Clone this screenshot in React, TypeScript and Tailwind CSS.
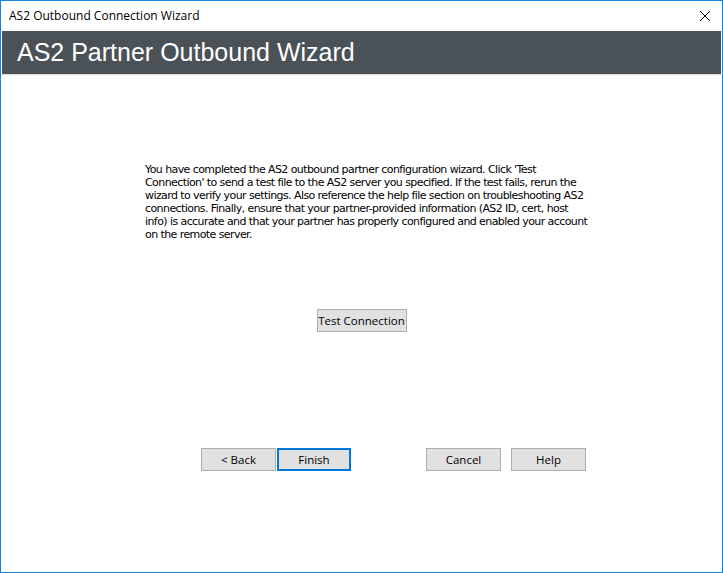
import React from 'react';

const lines = [
    "You have completed the AS2 outbound partner configuration wizard. Click 'Test",
    "Connection' to send a test file to the AS2 server you specified. If the test fails, rerun the",
    "wizard to verify your settings. Also reference the help file section on troubleshooting AS2",
    "connections. Finally, ensure that your partner-provided information (AS2 ID, cert, host",
    "info) is accurate and that your partner has properly configured and enabled your account",
    "on the remote server.",
];

const WinButton: React.FC<{ label: string; primary?: boolean; className?: string }> = ({ label, primary = false, className = '' }) => (
    <button
        className={`h-[23px] flex items-center justify-center whitespace-nowrap bg-[#e1e1e1] text-[11.5px] text-black ${primary ? 'border-2 border-[#0078d7]' : 'border border-[#adadad]'} ${className}`}
    >
        {label}
    </button>
);

export default function App() {
    return (
        <div
            className="w-[723px] h-[573px] flex flex-col bg-white border border-[#1883d7] overflow-hidden"
            style={{ fontFamily: '"Open Sans", "Noto Sans", sans-serif' }}
        >
            {/* Title bar */}
            <div className="h-[30px] flex items-center justify-between pl-[8px] pr-[10px]">
                <span className="text-[12px] text-black">AS2 Outbound Connection Wizard</span>
                <svg width="12" height="12" viewBox="0 0 12 12" className="mr-[1px]">
                    <path d="M1 1 L11 11 M11 1 L1 11" stroke="#000" strokeWidth="1" />
                </svg>
            </div>

            {/* Header */}
            <div className="mx-[1px] h-[44px] bg-[#4a5157] border-b border-[#dcdcdc] flex items-center pl-[15px]">
                <span className="text-white text-[25px] leading-none" style={{ fontFamily: '"Liberation Sans", Arial, sans-serif' }}>
                    AS2 Partner Outbound Wizard
                </span>
            </div>

            {/* Body */}
            <div className="flex-1 flex flex-col items-center pt-[88px]">
                <div
                    className="w-[445px] ml-[12px] text-[11px] leading-[13px] text-black"
                    style={{ fontFamily: '"DejaVu Sans", Tahoma, sans-serif' }}
                >
                    {lines.map((l, i) => (
                        <div key={i} className="whitespace-nowrap tracking-[-0.58px]">{l}</div>
                    ))}
                </div>

                <WinButton label="Test Connection" className="mt-[68px] w-[90px]" />

                <div className="mt-[116px] self-start ml-[200px] flex items-center">
                    <WinButton label="< Back" className="w-[75px]" />
                    <WinButton label="Finish" primary className="ml-[1px] w-[74px]" />
                    <WinButton label="Cancel" className="ml-[75px] w-[75px]" />
                    <WinButton label="Help" className="ml-[10px] w-[75px]" />
                </div>
            </div>
        </div>
    );
}
